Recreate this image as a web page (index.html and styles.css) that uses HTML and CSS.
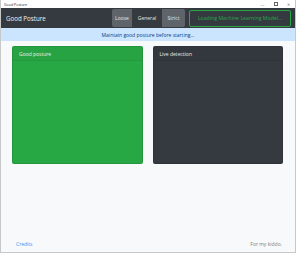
FILE: index.html
```html
<!DOCTYPE html>
<html lang="en">
<head>
  <meta charset="UTF-8" />
  <title>Good Posture</title>
  <link rel="stylesheet" href="styles.css">
</head>
<body>
  <div class="window">
    <div class="titlebar">
      <span class="title">Good Posture</span>
      <div class="controls">
        <span class="ctrl">&#8212;</span>
        <span class="ctrl box"></span>
        <span class="ctrl">&#10005;</span>
      </div>
    </div>

    <nav class="navbar">
      <span class="brand">Good Posture</span>
      <div class="btn-group">
        <button class="btn btn-light loose">Loose</button>
        <button class="btn general">General</button>
        <button class="btn btn-light strict">Strict</button>
      </div>
      <button class="btn-loading">Loading Machine Learning Model...</button>
    </nav>

    <div class="alert">Maintain good posture before starting...</div>

    <main class="content">
      <div class="cards">
        <div class="card card-green">
          <div class="card-header">Good posture</div>
        </div>
        <div class="card card-dark">
          <div class="card-header">Live detection</div>
        </div>
      </div>

      <footer class="footer">
        <a class="credits" href="#">Credits</a>
        <span class="note">For my kiddo.</span>
      </footer>
    </main>
  </div>
</body>
</html>
```

FILE: styles.css
```css
* {
  box-sizing: border-box;
}

body {
  margin: 0;
  font-family: 'Open Sans', 'Noto Sans', sans-serif;
  background-color: #ffffff;
}

.window {
  width: 296px;
  height: 253px;
  display: flex;
  flex-direction: column;
  border: 1px solid #c8c8c8;
  border-top: none;
  overflow: hidden;
}

.titlebar {
  height: 8px;
  display: flex;
  align-items: center;
  justify-content: space-between;
  padding: 0 0 0 3px;
  background-color: #ffffff;
  font-size: 3.6px;
  color: #222;
}

.controls {
  display: flex;
  align-items: center;
  height: 100%;
}

.ctrl {
  width: 13px;
  text-align: center;
  font-size: 4px;
  color: #666;
}

.ctrl.box {
  width: 4px;
  height: 4px;
  margin: 0 4.5px;
  border: 0.8px solid #666;
}

.navbar {
  height: 20px;
  display: flex;
  align-items: center;
  padding: 0 4px 0 5px;
  background-color: #343a40;
}

.brand {
  font-size: 6.2px;
  color: #f2f2f2;
  flex: 1;
}

.btn-group {
  display: flex;
  height: 18px;
  margin-right: 4px;
}

.btn {
  border: none;
  padding: 0;
  font-family: inherit;
  font-size: 5px;
  color: #e6e6e6;
  background-color: #343a40;
}

.loose {
  width: 20px;
  border-radius: 2px 0 0 2px;
}

.general {
  width: 30px;
}

.strict {
  width: 23px;
  border-radius: 0 2px 2px 0;
}

.btn-light {
  background-color: #5e646a;
}

.btn-loading {
  width: 102px;
  height: 17px;
  padding: 0;
  font-family: inherit;
  font-size: 5.2px;
  color: #28a745;
  background-color: #343a40;
  border: 1px solid #28a745;
  border-radius: 2px;
}

.alert {
  height: 13px;
  display: flex;
  align-items: center;
  justify-content: center;
  background-color: #cce5ff;
  color: #004085;
  font-size: 5px;
}

.content {
  flex: 1;
  display: flex;
  flex-direction: column;
  background-color: #f8f9fa;
  padding: 5px 12px 0 11px;
}

.cards {
  display: flex;
  gap: 10px;
  height: 118px;
}

.card {
  flex: 1;
  border-radius: 2px;
  border: 0.5px solid rgba(0,0,0,0.1);
}

.card-green {
  background-color: #28a745;
}

.card-dark {
  background-color: #343a40;
}

.card-header {
  height: 14px;
  display: flex;
  align-items: center;
  padding: 0 6px;
  font-size: 5px;
  color: #eeeeee;
  background-color: rgba(0,0,0,0.02);
  border-bottom: 0.5px solid rgba(0,0,0,0.06);
}

.footer {
  margin-top: auto;
  height: 17px;
  display: flex;
  align-items: center;
  justify-content: space-between;
  padding: 0 1px 0 4px;
  font-size: 5px;
}

.credits {
  color: #3a8ef6;
  text-decoration: none;
}

.note {
  color: #7a7f84;
}
```
